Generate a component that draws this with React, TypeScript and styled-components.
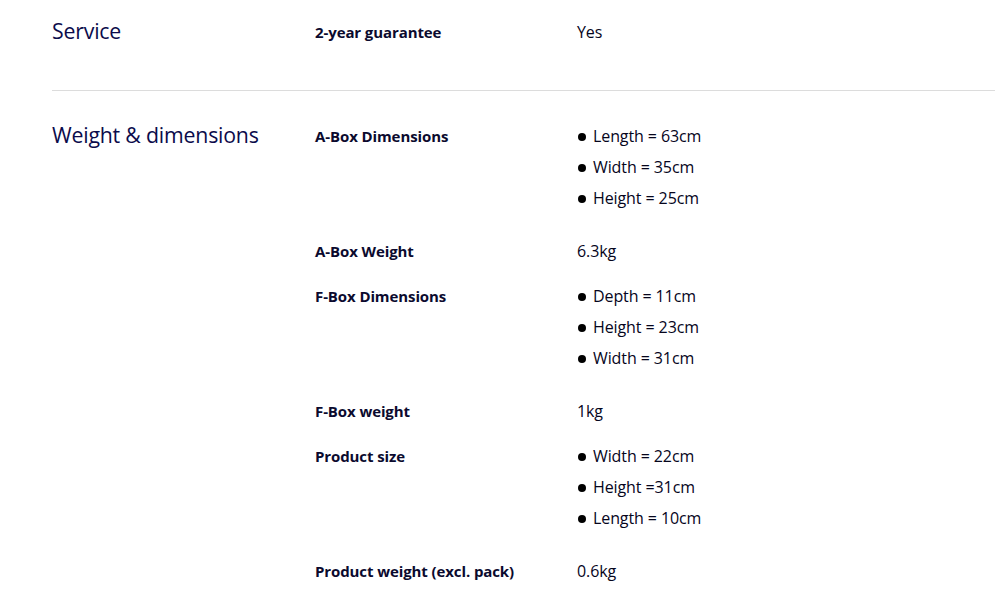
import React from "react";
import styled, { createGlobalStyle } from "styled-components";

const GlobalStyle = createGlobalStyle`
  body {
    margin: 0;
    background: #ffffff;
    font-family: "Open Sans", "Noto Sans", Arial, sans-serif;
    color: #0b0a2e;
  }
`;

const Page = styled.div`
  padding: 17px 0 0 52px;
`;

const Section = styled.section<{ $divider?: boolean }>`
  display: flex;
  padding: ${(p) => (p.$divider ? "30px 0 0" : "0 0 28px")};
  border-bottom: ${(p) => (p.$divider ? "none" : "1px solid #dcdcdc")};
`;

const SectionTitle = styled.h2`
  width: 263px;
  flex-shrink: 0;
  margin: 0;
  font-size: 21.3px;
  font-weight: 400;
  line-height: 27px;
  color: #0b0b4b;
  letter-spacing: -0.2px;
`;

const Rows = styled.div`
  flex: 1;
  display: flex;
  flex-direction: column;
`;

const Row = styled.div`
  display: flex;
  margin-bottom: 14px;
`;

const Label = styled.div`
  width: 262px;
  flex-shrink: 0;
  font-size: 15px;
  font-weight: 700;
  line-height: 31px;
  color: #0b0a2e;
  letter-spacing: -0.1px;
`;

const Value = styled.div`
  font-size: 16px;
  line-height: 31px;
  color: #06051c;
  letter-spacing: -0.1px;
`;

const List = styled.ul`
  margin: 0 0 8px;
  padding: 0;
  list-style: none;
`;

const Item = styled.li`
  display: flex;
  align-items: center;
  font-size: 16px;
  line-height: 31px;
  letter-spacing: -0.1px;
  color: #06051c;

  &::before {
    content: "";
    width: 8px;
    height: 8px;
    border-radius: 50%;
    background: #000000;
    margin: 0 7px 0 1px;
  }
`;

type Spec = { label: string; value: string | string[] };

const weight: Spec[] = [
  { label: "A-Box Dimensions", value: ["Length = 63cm", "Width = 35cm", "Height = 25cm"] },
  { label: "A-Box Weight", value: "6.3kg" },
  { label: "F-Box Dimensions", value: ["Depth = 11cm", "Height = 23cm", "Width = 31cm"] },
  { label: "F-Box weight", value: "1kg" },
  { label: "Product size", value: ["Width = 22cm", "Height =31cm", "Length = 10cm"] },
  { label: "Product weight (excl. pack)", value: "0.6kg" },
];

function SpecRow({ spec }: { spec: Spec }) {
  return (
    <Row>
      <Label>{spec.label}</Label>
      {Array.isArray(spec.value) ? (
        <List>
          {spec.value.map((v) => (
            <Item key={v}>{v}</Item>
          ))}
        </List>
      ) : (
        <Value>{spec.value}</Value>
      )}
    </Row>
  );
}

export default function App() {
  return (
    <Page>
      <GlobalStyle />
      <Section>
        <SectionTitle>Service</SectionTitle>
        <Rows>
          <SpecRow spec={{ label: "2-year guarantee", value: "Yes" }} />
        </Rows>
      </Section>
      <Section $divider>
        <SectionTitle>Weight &amp; dimensions</SectionTitle>
        <Rows>
          {weight.map((s) => (
            <SpecRow key={s.label} spec={s} />
          ))}
        </Rows>
      </Section>
    </Page>
  );
}
